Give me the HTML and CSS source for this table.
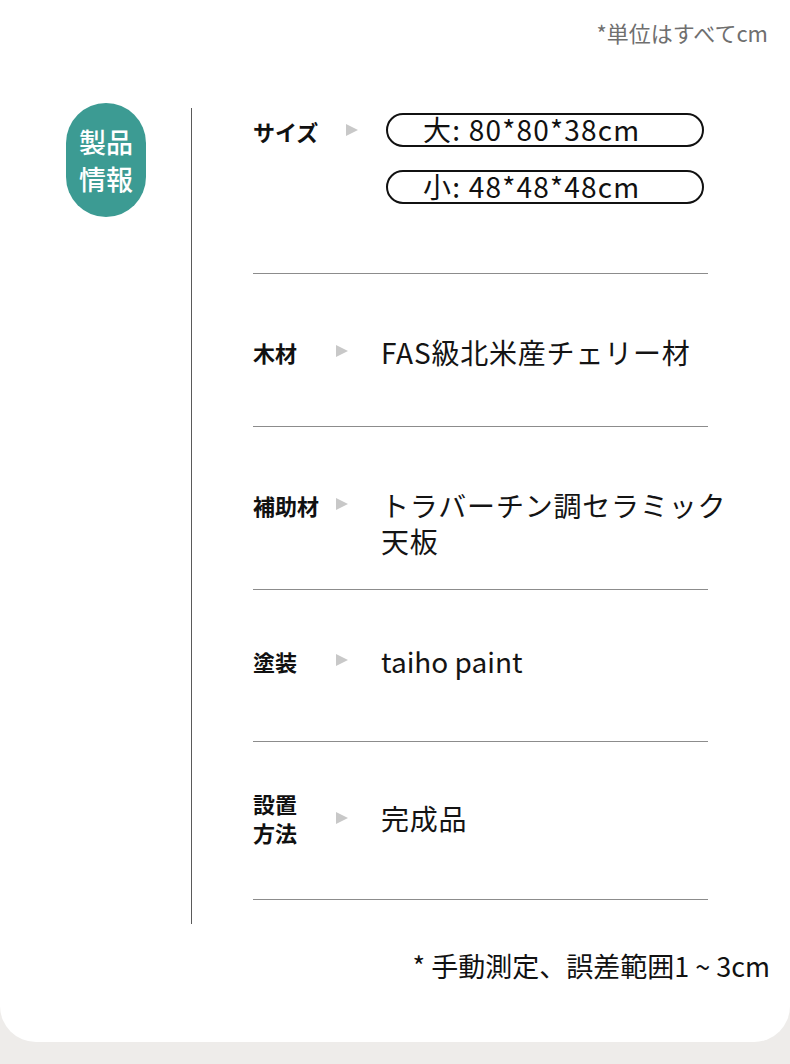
FILE: index.html
```html
<!DOCTYPE html>
<html lang="ja">
<head>
<meta charset="utf-8">
<link rel="stylesheet" href="styles.css">
</head>
<body>
<div class="card">
  <div class="unit-note">*単位はすべてcm</div>
  <div class="main">
    <div class="side">
      <div class="badge">製品<br>情報</div>
    </div>
    <div class="content">
      <div class="row row-size">
        <div class="label">サイズ</div>
        <div class="arrow"></div>
        <div class="pills">
          <div class="pill">大: 80*80*38cm</div>
          <div class="pill">小: 48*48*48cm</div>
        </div>
      </div>
      <div class="row row-wood">
        <div class="label">木材</div>
        <div class="arrow"></div>
        <div class="value">FAS級北米産チェリー材</div>
      </div>
      <div class="row row-sub">
        <div class="label">補助材</div>
        <div class="arrow"></div>
        <div class="value">トラバーチン調セラミック天板</div>
      </div>
      <div class="row row-paint">
        <div class="label">塗装</div>
        <div class="arrow"></div>
        <div class="value value-latin">taiho paint</div>
      </div>
      <div class="row row-install">
        <div class="label label-two">設置<br>方法</div>
        <div class="arrow"></div>
        <div class="value">完成品</div>
      </div>
    </div>
  </div>
  <div class="foot-note">* 手動測定、誤差範囲1 ~ 3cm</div>
</div>
</body>
</html>
```
FILE: styles.css
```css
* { box-sizing: border-box; }
html, body { margin: 0; padding: 0; }
body {
  background: #eeecea;
  font-family: "Noto Sans CJK JP", "Noto Sans", sans-serif;
  color: #111;
  width: 790px;
  height: 1064px;
  overflow: hidden;
}
.card {
  background: #fff;
  height: 1042px;
  border-radius: 0 0 36px 36px;
  padding-top: 18px;
}
.unit-note {
  text-align: right;
  padding-right: 22px;
  font-size: 22px;
  line-height: 28px;
  color: #6f6f6f;
}
.main {
  display: flex;
  margin-top: 57px;
}
.side {
  width: 191px;
  padding-left: 66px;
}
.badge {
  width: 80px;
  height: 114px;
  border-radius: 40px;
  background: #3c9b93;
  color: #fff;
  font-size: 27px;
  font-weight: 500;
  line-height: 37px;
  text-align: center;
  padding-top: 20px;
}
.content {
  margin-top: 5px;
  border-left: 1px solid #5a5a5a;
  padding-left: 61px;
  padding-bottom: 24px;
  width: 517px;
}
.row {
  display: grid;
  grid-template-columns: 83px 45px 360px;
  align-items: start;
  align-content: start;
  border-bottom: 1px solid #8c8c8c;
}
.label {
  font-size: 22px;
  font-weight: 700;
  line-height: 36px;
  color: #111;
  white-space: nowrap;
}
.label-two { line-height: 29px; }
.arrow {
  width: 0;
  height: 0;
  border-left: 12px solid #c8c8c8;
  border-top: 6.5px solid transparent;
  border-bottom: 6.5px solid transparent;
  margin-top: 11px;
}
.value {
  font-size: 28px;
  line-height: 36px;
  letter-spacing: 0.8px;
  color: #141414;
}
.value-latin { letter-spacing: 0; }
.row-size {
  height: 166px;
  padding-top: 5px;
  grid-template-columns: 93px 40px 318px;
}
.row-wood { height: 153px; padding-top: 60px; }
.row-sub { height: 163px; padding-top: 60px; }
.row-paint { height: 152px; padding-top: 53px; }
.row-install { height: 158px; padding-top: 47px; align-items: center; }
.row-install .arrow { margin-top: 0; }
.pills {
  display: flex;
  flex-direction: column;
  gap: 23px;
}
.pill {
  width: 318px;
  height: 34px;
  border: 2px solid #111;
  border-radius: 17px;
  font-size: 28px;
  line-height: 29px;
  letter-spacing: 1.2px;
  padding-left: 35px;
  color: #111;
  white-space: nowrap;
}
.foot-note {
  text-align: right;
  padding-right: 20px;
  margin-top: 23px;
  font-size: 27px;
  line-height: 38px;
  color: #111;
}
```
